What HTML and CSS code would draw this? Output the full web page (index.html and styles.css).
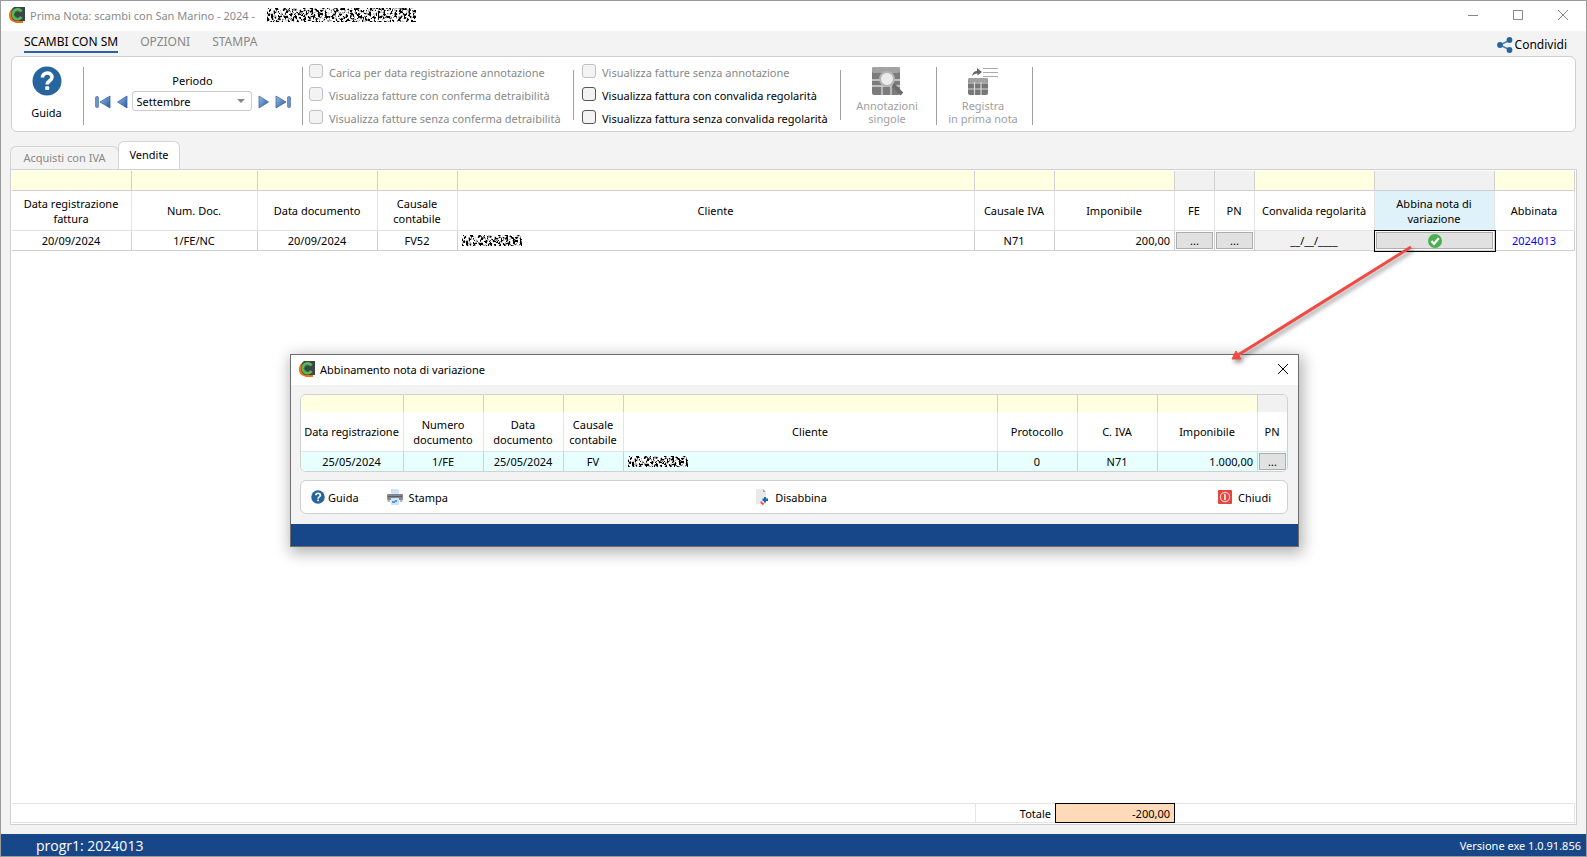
FILE: index.html
```html
<!DOCTYPE html>
<html lang="it">
<head>
<meta charset="utf-8">
<title>Prima Nota: scambi con San Marino</title>
<link rel="stylesheet" href="styles.css">
</head>
<body>
<svg class="defs" aria-hidden="true">
  <defs>
    <filter id="noise" x="0" y="0" width="100%" height="100%">
      <feTurbulence type="fractalNoise" baseFrequency="0.43 0.37" numOctaves="3" seed="12"/>
      <feColorMatrix type="matrix" values="7 0 0 0 -2.9  7 0 0 0 -2.9  7 0 0 0 -2.9  0 0 0 0 1"/>
    </filter>
    <linearGradient id="blue" x1="0" y1="0" x2="1" y2="1">
      <stop offset="0" stop-color="#9dbfe6"/><stop offset="1" stop-color="#24559c"/>
    </linearGradient>
    <symbol id="logo" viewBox="0 0 16 16">
      <path d="M5 1Q0 3 0 8Q0 14 5 15L7 16H14V13H5Z" fill="#e8710f"/>
      <path d="M5 0H16V14H6Q2 12 2 7Q2 2 5 0Z" fill="#3d4545"/>
      <path d="M12.500 4.500A4.800 4.800 0 1 0 12.500 10" fill="none" stroke="#5cb85c" stroke-width="2.800"/>
      <path d="M11 5.500A3.200 3.200 0 1 0 11 9.500" fill="none" stroke="#2f7f55" stroke-width="1"/>
    </symbol>
    <symbol id="help" viewBox="0 0 30 30">
      <circle cx="15" cy="15" r="14.500" fill="#27659f"/>
      <path d="M10.500 11.500C10.500 5.500 20 5.500 20 11.300C20 15 15.200 14.600 15.200 18.600" fill="none" stroke="#fff" stroke-width="3.600"/>
      <rect x="13.200" y="20.300" width="4" height="3.600" rx="1" fill="#fff"/>
    </symbol>
  </defs>
</svg>

<div class="window">
  <header class="titlebar">
    <svg class="logo"><use href="#logo"/></svg>
    <span class="title">Prima Nota: scambi con San Marino - 2024 -</span>
    <svg class="redacted redacted-title"><rect width="100%" height="100%" filter="url(#noise)"/></svg>
    <div class="winbuttons">
      <button aria-label="Riduci"><svg viewBox="0 0 10 10"><path d="M0 5.500H10"/></svg></button>
      <button aria-label="Ingrandisci"><svg viewBox="0 0 10 10"><path d="M.5.5H9.500V9.500H.5Z"/></svg></button>
      <button aria-label="Chiudi finestra"><svg viewBox="0 0 10 10"><path d="M0 0L10 10M10 0L0 10"/></svg></button>
    </div>
  </header>

  <nav class="menu">
    <button class="active">SCAMBI CON SM</button>
    <button>OPZIONI</button>
    <button>STAMPA</button>
    <button class="share">
      <svg viewBox="0 0 16 16"><path d="M13 3L3 8L13 13" fill="none" stroke="#4a80b5" stroke-width="1.500"/><g fill="#27659f"><circle cx="12.500" cy="3" r="2.900"/><circle cx="3" cy="8" r="2.900"/><circle cx="12.500" cy="13" r="2.900"/></g></svg>
      Condividi
    </button>
  </nav>

  <section class="ribbon">
    <button class="guide"><svg><use href="#help"/></svg>Guida</button>
    <i class="sep"></i>
    <div class="period">
      <label for="periodo">Periodo</label>
      <div class="period-row">
        <button aria-label="Primo"><svg width="16" height="14" viewBox="0 0 16 14"><rect x=".5" y="1.500" width="3" height="11" rx="1" fill="#6d93c6" stroke="#3d68a8" stroke-width=".6"/><path d="M15 1V13L5 7Z" fill="url(#blue)" stroke="#3d68a8" stroke-width=".8"/></svg></button>
        <button class="prev" aria-label="Precedente"><svg width="11" height="14" viewBox="0 0 11 14"><path d="M10 1V13L.5 7Z" fill="url(#blue)" stroke="#3d68a8" stroke-width=".8"/></svg></button>
        <span class="select"><select id="periodo"><option>Settembre</option></select></span>
        <button class="next" aria-label="Successivo"><svg width="11" height="14" viewBox="0 0 11 14"><path d="M1 1V13L10.500 7Z" fill="url(#blue)" stroke="#3d68a8" stroke-width=".8"/></svg></button>
        <button aria-label="Ultimo"><svg width="16" height="14" viewBox="0 0 16 14"><rect x="12.500" y="1.500" width="3" height="11" rx="1" fill="#6d93c6" stroke="#3d68a8" stroke-width=".6"/><path d="M1 1V13L11 7Z" fill="url(#blue)" stroke="#3d68a8" stroke-width=".8"/></svg></button>
      </div>
    </div>
    <i class="sep"></i>
    <div class="checks checks-first">
      <label><input type="checkbox" disabled>Carica per data registrazione annotazione</label>
      <label><input type="checkbox" disabled>Visualizza fatture con conferma detraibilità</label>
      <label><input type="checkbox" disabled>Visualizza fatture senza conferma detraibilità</label>
    </div>
    <i class="sep short"></i>
    <div class="checks checks-second">
      <label><input type="checkbox" disabled>Visualizza fatture senza annotazione</label>
      <label><input type="checkbox">Visualizza fattura con convalida regolarità</label>
      <label><input type="checkbox">Visualizza fattura senza convalida regolarità</label>
    </div>
    <i class="sep short"></i>
    <button class="big" disabled>
      <svg width="32" height="30" viewBox="0 0 32 30"><rect x="1" y="1" width="28" height="28" rx="2" fill="#7c7c7c"/><rect x="1" y="1" width="28" height="6" rx="2" fill="#a2a2a2"/><path d="M1 14H29M1 20H29M11 20V29M20 20V29" stroke="#d8d8d8" stroke-width="1.300"/><path d="M22 19L31 28" stroke="#6c6c6c" stroke-width="4"/><circle cx="16" cy="13" r="7" fill="#ececec" stroke="#b4b4b4" stroke-width="2"/></svg>
      Annotazioni<br>singole
    </button>
    <i class="sep"></i>
    <button class="big" disabled>
      <svg width="32" height="30" viewBox="0 0 32 30"><rect x="1" y="12" width="20" height="17" rx="2" fill="#777"/><rect x="1" y="12" width="20" height="4" rx="2" fill="#a2a2a2"/><path d="M1 17H21M1 23H21M7.500 16V29M14 16V29" stroke="#d8d8d8" stroke-width="1.200"/><path d="M16 2.500H31M16 6.500H31M16 10.500H31" stroke="#b0a9a9"/><path d="M5 10Q6 5 10 5V2L15 6L10.500 9.500V7.500Q7.500 7 5 10Z" fill="#666"/></svg>
      Registra<br>in prima nota
    </button>
    <i class="sep"></i>
  </section>

  <div class="tabs">
    <button class="tab">Acquisti con IVA</button>
    <button class="tab current">Vendite</button>
  </div>

  <main class="grid">
    <table class="sales">
      <colgroup><col class="w120"><col class="w126"><col class="w120"><col class="w80"><col><col class="w80"><col class="w120"><col class="w40"><col class="w40"><col class="w120"><col class="w120"><col class="w80"></colgroup>
      <thead>
        <tr class="filter"><td></td><td></td><td></td><td></td><td></td><td></td><td></td><td class="off"></td><td class="off"></td><td></td><td class="off"></td><td></td></tr>
        <tr><th>Data registrazione<br>fattura</th><th>Num. Doc.</th><th>Data documento</th><th>Causale<br>contabile</th><th>Cliente</th><th>Causale IVA</th><th>Imponibile</th><th>FE</th><th>PN</th><th>Convalida regolarità</th><th class="selected">Abbina nota di<br>variazione</th><th>Abbinata</th></tr>
      </thead>
      <tbody>
        <tr><td>20/09/2024</td><td>1/FE/NC</td><td>20/09/2024</td><td>FV52</td><td class="left"><svg class="redacted redacted-cell"><rect width="100%" height="100%" filter="url(#noise)"/></svg></td><td>N71</td><td class="num">200,00</td><td class="btn"><button aria-label="Apri FE">...</button></td><td class="btn"><button aria-label="Apri PN">...</button></td><td class="off">__/__/____</td><td class="btn focus"><button aria-label="Abbina nota di variazione"><svg width="14" height="14" viewBox="0 0 14 14"><circle cx="7" cy="7" r="7" fill="#4caf50"/><path d="M3.500 7L6 9.800L10.800 4.200" fill="none" stroke="#fff" stroke-width="2.200"/></svg></button></td><td class="link">2024013</td></tr>
      </tbody>
    </table>
    <table class="totals">
      <colgroup><col><col class="w80"><col class="w120"><col class="w400"></colgroup>
      <tr><td></td><th>Totale</th><td class="sum">-200,00</td><td class="rest"></td></tr>
    </table>
  </main>

  <footer class="status"><span class="progr">progr1: 2024013</span><span>Versione exe 1.0.91.856</span></footer>
</div>

<section class="dialog" role="dialog" aria-label="Abbinamento nota di variazione">
  <header class="dialog-title">
    <svg class="logo"><use href="#logo"/></svg>
    <span>Abbinamento nota di variazione</span>
    <button aria-label="Chiudi"><svg width="12" height="12" viewBox="0 0 12 12"><path d="M1 1L11 11M11 1L1 11"/></svg></button>
  </header>
  <div class="dialog-body">
    <div class="dialog-grid">
      <table>
        <colgroup><col class="w103"><col class="w80"><col class="w80"><col class="w60"><col><col class="w80"><col class="w80"><col class="w100"><col class="w29"></colgroup>
        <thead>
          <tr class="filter"><td></td><td></td><td></td><td></td><td></td><td></td><td></td><td></td><td class="off"></td></tr>
          <tr><th>Data registrazione</th><th>Numero<br>documento</th><th>Data<br>documento</th><th>Causale<br>contabile</th><th>Cliente</th><th>Protocollo</th><th>C. IVA</th><th>Imponibile</th><th>PN</th></tr>
        </thead>
        <tbody>
          <tr><td>25/05/2024</td><td>1/FE</td><td>25/05/2024</td><td>FV</td><td class="left"><svg class="redacted redacted-cell"><rect width="100%" height="100%" filter="url(#noise)"/></svg></td><td>0</td><td>N71</td><td class="num">1.000,00</td><td class="btn"><button aria-label="Apri PN">...</button></td></tr>
        </tbody>
      </table>
    </div>
    <div class="toolbar">
      <div class="tools">
        <button class="tool-guide"><svg width="14" height="14"><use href="#help"/></svg>Guida</button>
        <button class="tool"><svg width="16" height="16" viewBox="0 0 16 16"><path d="M4 0H11L12 2V6H4Z" fill="#cfe3f8"/><rect x="0" y="5" width="16" height="6" rx="1" fill="#84898f"/><rect x="1" y="7" width="14" height="1" fill="#5c6167"/><rect x="13" y="5.500" width="2" height="1" fill="#e44"/><path d="M0 11H3V13H1ZM13 11H16L15 13H13Z" fill="#b4b8bc"/><rect x="4" y="9" width="8" height="7" fill="#cfe3f8"/><path d="M5 12H8V14H5ZM8 11H10V13H8Z" fill="#4c9be8"/></svg>Stampa</button>
      </div>
      <button class="tool"><svg width="14" height="16" viewBox="0 0 14 16"><path d="M1 0H8L11 3V15H1Z" fill="#e9e9e9"/><path d="M8 0V3H11Z" fill="#aaa"/><path d="M9 8H11V9.500H13V12H11V13.500H9V12H7.500V9.500H9Z" fill="#1769b5"/><path d="M5.500 12L7 13L9.500 15L7.500 16L5.500 14Z" fill="#ef4b4b"/></svg>Disabbina</button>
      <button class="tool end"><svg width="14" height="14" viewBox="0 0 14 14"><rect width="14" height="14" rx="1" fill="#e5443f"/><circle cx="7" cy="7" r="4.600" fill="none" stroke="#fbd0ce" stroke-width="1.200"/><path d="M7 4V10" stroke="#fff" stroke-width="1.500"/></svg>Chiudi</button>
    </div>
  </div>
  <div class="dialog-status"></div>
</section>

<svg class="arrow" width="190" height="124" viewBox="0 0 190 124" aria-hidden="true"><path d="M184 5L11 113" stroke="#ee4b45" stroke-width="3"/><path d="M5 117L9 109L14 117Z" fill="#ee4b45" stroke="#ee4b45"/></svg>
</body>
</html>
```

FILE: styles.css
```css
* { box-sizing: border-box; }
body {
  margin: 0;
  position: relative;
  font: 11px/15px "Noto Sans", "Open Sans", sans-serif;
  color: #000;
}
button {
  border: 0;
  padding: 0;
  background: none;
  font: inherit;
  color: inherit;
}
svg { display: block; flex: none; }
.defs { position: absolute; width: 0; height: 0; }

.window {
  display: flex;
  flex-direction: column;
  height: 100vh;
  border: 1px solid #9b9b9b;
  background: #f3f3f3;
}
.logo { width: 16px; height: 16px; }
.titlebar {
  display: flex;
  align-items: center;
  height: 30px;
  padding: 0 18px 2px 8px;
  background: #fff;
  color: #8a8a8a;
}
.title { min-width: 232px; margin: 0 5px; }
.redacted-title { width: 149px; height: 14px; }
.redacted-cell { width: 60px; height: 11px; }
.winbuttons { display: flex; gap: 35px; margin-left: auto; }
.winbuttons svg { width: 10px; height: 10px; }
.winbuttons path { fill: none; stroke: #888; }

.menu {
  display: flex;
  align-items: flex-start;
  gap: 22px;
  height: 25px;
  padding: 2px 19px 0 23px;
  font-size: 12px;
  color: #888;
}
.menu button { height: 20px; line-height: 18px; border-bottom: 2px solid transparent; }
.menu .active { color: #000; border-color: #27659f; }
.menu .share {
  display: flex;
  align-items: center;
  gap: 2px;
  height: 24px;
  margin-left: auto;
  border: 0;
  color: #000;
}
.share svg { width: 16px; height: 16px; }

.ribbon {
  display: flex;
  align-items: flex-start;
  height: 76px;
  margin: 0 10px;
  padding-top: 7px;
  border: 1px solid #d0d0d0;
  border-radius: 6px;
  background: #fff;
}
.sep { width: 1px; height: 58px; margin-top: 3px; background: #a0a0a0; }
.sep.short { height: 50px; margin-top: 6px; }
.guide {
  display: flex;
  flex-direction: column;
  align-items: center;
  gap: 9px;
  width: 71px;
  padding: 2px 2px 0 0;
}
.guide svg { width: 30px; height: 30px; }
.period { width: 218px; padding: 9px 1px 0 0; text-align: center; }
.period label { display: block; margin-bottom: 3px; }
.period-row { display: flex; align-items: center; justify-content: center; gap: 6px; }
.period-row > button { padding-top: 2px; }
.prev { margin-right: -2px; }
.select { position: relative; width: 120px; height: 20px; }
.select select {
  appearance: none;
  width: 100%;
  height: 20px;
  padding: 0 4px;
  border: 1px solid #ccc;
  border-radius: 3px;
  background: #fff;
  font: inherit;
}
.select::after {
  content: "";
  position: absolute;
  right: 7px;
  top: 8px;
  border: 4px solid transparent;
  border-top-color: #888;
}
.checks { padding-left: 6px; }
.checks-first { width: 270px; }
.checks-second { width: 266px; padding-left: 8px; }
.checks label { display: flex; gap: 6px; height: 23px; line-height: 17px; white-space: nowrap; }
.checks input {
  appearance: none;
  width: 14px;
  height: 14px;
  margin: 0;
  border: 1px solid #555;
  border-radius: 3px;
  background: #f3f3f3;
}
.checks input:disabled { border-color: #c0c0c0; }
.checks label:has(:disabled) { color: #888; }
.big {
  width: 95px;
  padding: 2px 3px 0 0;
  color: #a0a0a0;
  line-height: 13px;
}
.big svg { margin: 0 auto 3px; }

.tabs { display: flex; align-items: flex-end; height: 37px; padding-left: 9px; }
.tab {
  min-width: 109px;
  height: 23px;
  padding: 0 10px 2px;
  border: 1px solid #d4d4d4;
  border-bottom: 0;
  border-radius: 6px 6px 0 0;
  background: #f3f3f3;
  color: #888;
}
.tab.current { min-width: 62px; height: 28px; margin-left: -1px; background: #fff; color: #000; }

.grid {
  flex: 1;
  display: flex;
  flex-direction: column;
  justify-content: space-between;
  margin: 0 9px 9px;
  padding: 1px;
  border: 1px solid #d0d0d0;
  background: #fff;
}
table { width: 100%; table-layout: fixed; border-collapse: separate; border-spacing: 0; }
.w29 { width: 29px; } .w40 { width: 40px; } .w60 { width: 60px; } .w80 { width: 80px; }
.w100 { width: 100px; } .w103 { width: 103px; } .w120 { width: 120px; } .w126 { width: 126px; }
.w400 { width: 400px; }
th { font-weight: 400; height: 40px; border-right: 1px solid #e4e4e4; border-bottom: 1px solid #e4e4e4; }
td { height: 20px; border-right: 1px solid #d0d0d0; border-bottom: 1px solid #d0d0d0; text-align: center; }
th, td { padding: 0 1px 0 0; white-space: nowrap; }
.filter td { background: #ffffe1; }
.filter td.off, td.off { background: #f1f1f1; }
.selected { background: #dff1f9; }
td.left { padding-left: 4px; }
td.num { padding-right: 4px; text-align: right; }
td.link { color: #00f; }
td.btn { padding: 1px; }
td.btn button {
  display: block;
  width: 100%;
  height: 17px;
  line-height: 14px;
  border: 1px solid #adadad;
  background: #e1e1e1;
}
td.focus { outline: 1px solid #000; }
td.focus svg { margin: 0 auto; }
.totals td, .totals th { height: 20px; border: 1px solid #e4e4e4; border-width: 1px 0; }
.totals th { padding-right: 4px; border-left-width: 1px; text-align: right; }
.totals .sum { padding-right: 4px; border: 1px solid #000; background: #ffdab9; text-align: right; }
.totals .rest { border-right-width: 1px; }

.status {
  display: flex;
  align-items: center;
  justify-content: space-between;
  height: 22px;
  padding: 0 5px 0 35px;
  background: #184789;
  color: #fff;
}
.progr { font-family: "Open Sans", "Noto Sans", sans-serif; font-size: 14px; }

.dialog {
  position: absolute;
  top: 354px;
  left: 290px;
  right: 288px;
  border: 1px solid #6e6e6e;
  background: #f3f3f3;
  box-shadow: 2px 4px 14px 2px rgba(0, 0, 0, .3);
}
.dialog-title {
  display: flex;
  align-items: center;
  gap: 5px;
  height: 30px;
  padding: 0 9px 2px 8px;
  background: #fff;
}
.dialog-title button { margin-left: auto; }
.dialog-title path { stroke: #000; }
.dialog-body { display: grid; gap: 8px; padding: 9px 10px 10px 9px; }
.dialog-grid, .toolbar {
  border: 1px solid #d0d0d0;
  border-radius: 6px;
  background: #fff;
  overflow: hidden;
}
.dialog-grid .filter td { height: 17px; border-bottom: 0; }
.dialog-grid tbody td { height: 19px; border-bottom: 0; background: #e8ffff; }
.dialog-grid tr > :last-child { border-right: 0; }
.toolbar {
  display: grid;
  grid-template-columns: 1fr auto 1fr;
  align-items: center;
  height: 34px;
  padding: 0 16px 0 10px;
}
.toolbar button, .tools { display: flex; align-items: center; }
.tools { gap: 28px; }
.toolbar .tool-guide { gap: 3px; }
.toolbar .tool { gap: 6px; }
.toolbar .end { justify-self: end; }
.dialog-status { height: 22px; background: #184789; }

.arrow {
  position: absolute;
  left: 1227px;
  top: 242px;
  filter: drop-shadow(2px 3px 2px rgba(0, 0, 0, .4));
}
```
